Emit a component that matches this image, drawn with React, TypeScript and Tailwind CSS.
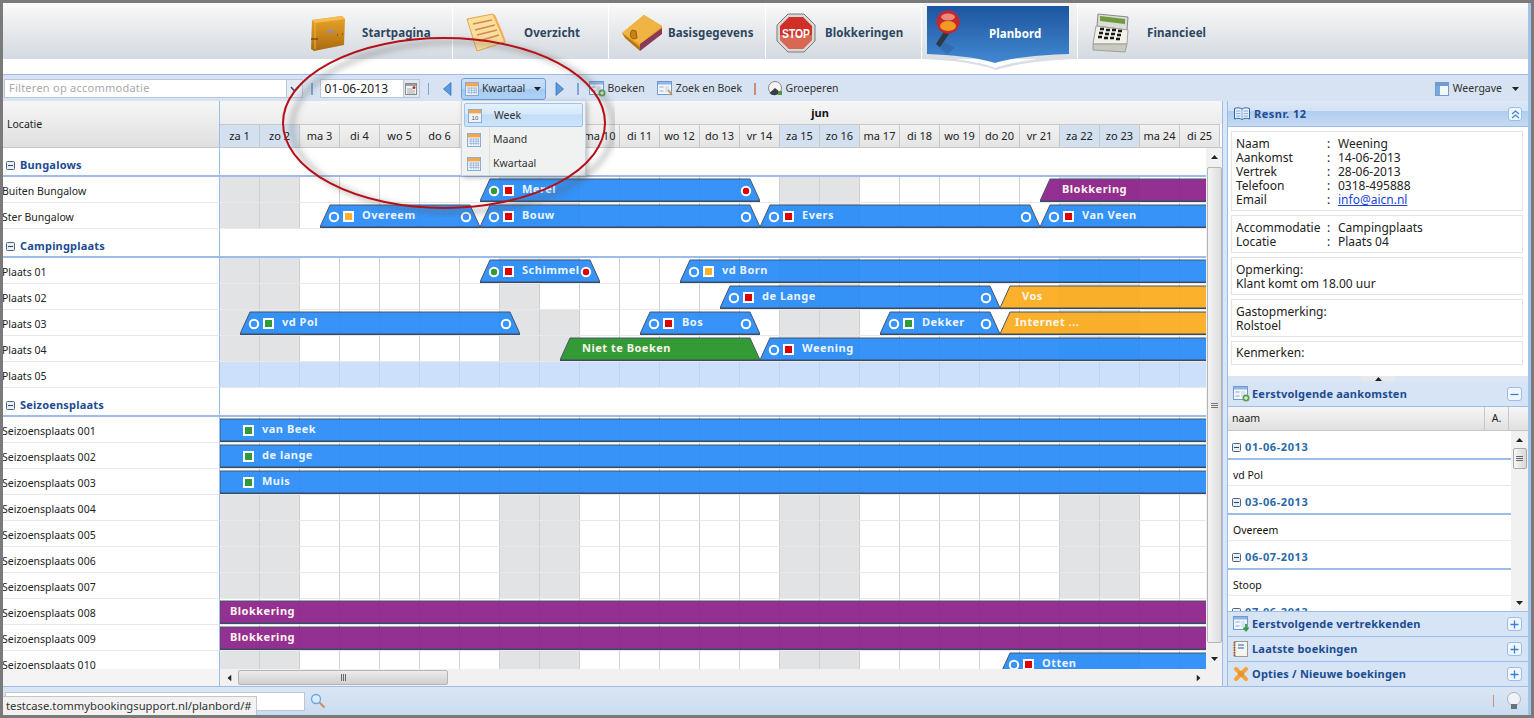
import React from "react";

const BLUE = "#3a94f8";
const days = Array.from({ length: 25 }, (_, i) => {
  const names = ["za", "zo", "ma", "di", "wo", "do", "vr"];
  return { label: `${names[i % 7]} ${i + 1}`, weekend: i % 7 < 2 };
});

type Bar = {
  l: number;
  r?: number;
  t: string;
  c?: "blue" | "purple" | "green" | "orange";
  start?: string;
  sq?: string;
  end?: string;
  tx?: number;
};
type Row = { name: string; bars?: Bar[]; selected?: boolean; white?: number[] };
type Group = { name: string; rows: Row[] };

const G = "#339a3a";
const R = "#dc0000";
const O = "#fbb12d";
const groups: Group[] = [
  {
    name: "Bungalows",
    rows: [
      {
        name: "Buiten Bungalow",
        bars: [
          { l: 480, r: 760, t: "Merel", start: G, sq: R, end: R },
          { l: 1040, t: "Blokkering", c: "purple", tx: 22 },
        ],
      },
      {
        name: "Ster Bungalow",
        bars: [
          { l: 320, r: 480, t: "Overeem", start: BLUE, sq: O, end: BLUE },
          { l: 480, r: 760, t: "Bouw", start: BLUE, sq: R, end: BLUE },
          { l: 760, r: 1040, t: "Evers", start: BLUE, sq: R, end: BLUE },
          { l: 1040, t: "Van Veen", start: BLUE, sq: R },
        ],
      },
    ],
  },
  {
    name: "Campingplaats",
    rows: [
      {
        name: "Plaats 01",
        bars: [
          { l: 480, r: 600, t: "Schimmel", start: G, sq: R, end: R },
          { l: 680, t: "vd Born", start: BLUE, sq: O },
        ],
      },
      {
        name: "Plaats 02",
        white: [8],
        bars: [
          { l: 720, r: 1000, t: "de Lange", start: BLUE, sq: R, end: BLUE },
          { l: 1000, t: "Vos", c: "orange", tx: 22 },
        ],
      },
      {
        name: "Plaats 03",
        bars: [
          { l: 240, r: 520, t: "vd Pol", start: BLUE, sq: G, end: BLUE },
          { l: 640, r: 760, t: "Bos", start: BLUE, sq: R, end: BLUE },
          { l: 880, r: 1000, t: "Dekker", start: BLUE, sq: G, end: BLUE },
          { l: 1000, t: "Internet ...", c: "orange", tx: 15 },
        ],
      },
      {
        name: "Plaats 04",
        bars: [
          { l: 560, r: 760, t: "Niet te Boeken", c: "green", tx: 22 },
          { l: 760, t: "Weening", start: BLUE, sq: R },
        ],
      },
      { name: "Plaats 05", selected: true },
    ],
  },
  {
    name: "Seizoensplaats",
    rows: [
      { name: "Seizoensplaats 001", bars: [{ l: 220, t: "van Beek", sq: G }] },
      { name: "Seizoensplaats 002", bars: [{ l: 220, t: "de lange", sq: G }] },
      { name: "Seizoensplaats 003", bars: [{ l: 220, t: "Muis", sq: G }] },
      { name: "Seizoensplaats 004" },
      { name: "Seizoensplaats 005" },
      { name: "Seizoensplaats 006" },
      { name: "Seizoensplaats 007" },
      { name: "Seizoensplaats 008", bars: [{ l: 220, t: "Blokkering", c: "purple", tx: 10 }] },
      { name: "Seizoensplaats 009", bars: [{ l: 220, t: "Blokkering", c: "purple", tx: 10 }] },
      { name: "Seizoensplaats 010", bars: [{ l: 1000, t: "Otten", start: BLUE, sq: R }] },
    ],
  },
];

const fills: Record<string, string> = {
  blue: "rgba(33,135,246,0.9)",
  purple: "rgba(140,30,138,0.92)",
  green: "#339a35",
  orange: "rgba(251,170,25,0.92)",
};

function BarView({ b }: { b: Bar }) {
  const GRID_R = 1206;
  const openEnd = b.r === undefined;
  const right = b.r ?? GRID_R;
  const w = right - b.l;
  const flushLeft = b.l === 220;
  const topL = flushLeft ? 0 : 10;
  const topR = openEnd ? w : w - 10;
  const c = b.c ?? "blue";
  const points = `0,23 ${topL},1 ${topR},1 ${w},23`;
  const tx = b.tx ?? 42;
  const textClass = c === "blue" ? "text-[#eaf4ff]" : "text-[#fbf6ec]";
  return (
    <div className="absolute top-[1px] h-[24px]" style={{ left: b.l - 220, width: w }}>
      <svg width={w} height={24} className="absolute left-0 top-0 block">
        <polygon points={points} fill={fills[c]} />
        <path d={`M0,23 L${topL},1 L${topR},1 ${openEnd ? "" : `L${w},23`}`} fill="none" stroke="#46566c" strokeWidth="1" />
        <path d={`M0,23.2 L${w},23.2`} stroke="#3a4c63" strokeWidth="1.4" />
      </svg>
      {b.start && <Dot x={14} color={b.start} />}
      {b.sq && <Sq x={28} color={b.sq} />}
      {b.end && <Dot x={w - 14} color={b.end} />}
      <span
        className={`absolute top-[3px] whitespace-nowrap text-[11px] font-bold leading-[16px] tracking-[0.5px] ${textClass}`}
        style={{ left: tx }}
      >
        {b.t}
      </span>
    </div>
  );
}

function Dot({ x, color }: { x: number; color: string }) {
  return (
    <svg width="12" height="12" className="absolute top-[7px]" style={{ left: x - 6 }}>
      <circle cx="6" cy="6" r="4.2" fill={color} stroke="#fff" strokeWidth="2" />
    </svg>
  );
}

function Sq({ x, color }: { x: number; color: string }) {
  return (
    <svg width="11" height="11" className="absolute top-[7px]" style={{ left: x - 5 }}>
      <rect width="11" height="11" fill="#fff" />
      <rect x="2" y="2" width="7" height="7" fill={color} />
    </svg>
  );
}

function Minus() {
  return (
    <svg width="9" height="9" className="shrink-0">
      <rect x="0.5" y="0.5" width="8" height="8" rx="1" fill="#e9eef5" stroke="#4c6480" />
      <path d="M2 4.5H7" stroke="#2d435e" />
    </svg>
  );
}

function Cells({ selected, gray, white }: { selected?: boolean; gray: boolean; white?: number[] }) {
  return (
    <div className="flex h-full w-[1000px]">
      {days.map((d, i) => (
        <div
          key={i}
          className={`h-full w-[40px] shrink-0 border-r ${
            selected
              ? "border-[#c0d4ee] bg-[#cce0fb]"
              : gray && d.weekend && !white?.includes(i)
                ? "border-[#d0d0d0] bg-[#e2e3e5]"
                : "border-[#d0d0d0] bg-white"
          }`}
        />
      ))}
    </div>
  );
}

function TabIcon({ kind }: { kind: string }) {
  switch (kind) {
    case "case":
      return (
        <svg width="36" height="36" viewBox="0 0 36 36">
          <defs>
            <linearGradient id="cs" x1="0" y1="0" x2="0" y2="1">
              <stop offset="0" stopColor="#e9a52c" />
              <stop offset="0.55" stopColor="#c9851a" />
              <stop offset="1" stopColor="#a56a10" />
            </linearGradient>
          </defs>
          <path d="M2 5 L32 1 L35 4 L34 30 L4 36 L1 34Z" fill="url(#cs)" />
          <path d="M2 5 L32 1 L35 4 L5 8Z" fill="#f3bd52" />
          <path d="M5 8 L5 34" stroke="#f0b343" strokeWidth="1" />
          <path d="M1 24 H8" stroke="#52300a" strokeWidth="1" />
          <rect x="17" y="15" width="7" height="3" rx="1.5" fill="#9a8aa8" />
          <path d="M27 20h1M32 19h1" stroke="#3d2405" />
        </svg>
      );
    case "note":
      return (
        <svg width="42" height="40" viewBox="0 0 42 40">
          <path d="M2 6 L28 1 L40 29 L12 38Z" fill="#fbdf9b" stroke="#e0a64b" />
          <path d="M29 2 L36 18 L40 29" fill="none" stroke="#f3ae5a" strokeWidth="2" />
          <path d="M8 11 L27 7 M10 17 L30 12 M12 22 L32 17 M14 28 L34 22" stroke="#d0875a" strokeWidth="1.6" />
        </svg>
      );
    case "book":
      return (
        <svg width="44" height="38" viewBox="0 0 44 38">
          <path d="M2 19 L24 1 L42 12 L42 19 L20 36Z" fill="#e6a02a" />
          <path d="M2 19 L24 1 L42 12 L20 30Z" fill="#efb444" />
          <path d="M20 30 L42 14 L42 20 L20 37Z" fill="#8a3a57" />
          <path d="M12 16 C8 22 12 27 17 24 L16 17Z" fill="#c98117" stroke="#9a5f0c" />
          <path d="M2 19 L20 33 L20 37 L5 24Z" fill="#b77510" />
        </svg>
      );
    case "stop":
      return (
        <svg width="40" height="40" viewBox="0 0 40 40">
          <polygon points="12,1 28,1 39,12 39,28 28,39 12,39 1,28 1,12" fill="#d8d8d8" stroke="#7a7a7a" />
          <polygon points="13,4 27,4 36,13 36,27 27,36 13,36 4,27 4,13" fill="#cf2f26" />
          <polygon points="4,22 36,22 36,27 27,36 13,36 4,27" fill="#dd8f72" opacity="0.6" />
          <text x="20" y="25" textAnchor="middle" fontSize="13" fontWeight="700" fill="#fff" fontFamily="Liberation Sans, sans-serif" textLength="28" lengthAdjust="spacingAndGlyphs">STOP</text>
        </svg>
      );
    case "pin":
      return (
        <svg width="30" height="44" viewBox="0 0 30 44">
          <path d="M6 30 L20 38 L12 44 L2 36Z" fill="#2b5f9e" opacity="0.5" />
          <path d="M10 20 L1 34 L5 37 L14 24Z" fill="#2e3a42" />
          <circle cx="13" cy="12" r="11.500" fill="#c9252b" />
          <ellipse cx="13" cy="7" rx="7" ry="3.500" fill="#ea8a7a" />
          <ellipse cx="13" cy="16" rx="8" ry="5" fill="#ee9d22" />
        </svg>
      );
    default:
      return (
        <svg width="40" height="42" viewBox="0 0 40 42">
          <path d="M7 2 L37 5 L36 18 L6 14Z" fill="#dcdcd8" stroke="#8a8a88" />
          <path d="M9 4 L34 7 L34 12 L9 9Z" fill="#6f9a3f" />
          <path d="M5 14 L37 18 L36 32 L2 32Z" fill="#f1f1ea" stroke="#a4a49e" />
          <path d="M2 32 L36 32 L34 40 L2 38Z" fill="#c9c9c0" stroke="#a0a09a" />
          <path d="M9 17h4M15 18h4M21 18h4M27 19h4M8 21h4M14 22h4M20 22h4M26 23h4M7 25h4M13 26h4M19 26h4M25 27h4" stroke="#1a1a1a" strokeWidth="2.4" />
        </svg>
      );
  }
}

const tabLabel = "text-[11.5px] font-bold tracking-[0.1px]";

function Tab({ icon, label, w, iconW, last }: { icon: string; label: string; w: string; iconW: string; last?: boolean }) {
  return (
    <div className={`flex h-[56px] shrink-0 items-center pt-[4px] ${last ? "" : "border-r border-white"} ${w}`}>
      <div className={`flex shrink-0 justify-start ${iconW}`}>
        <TabIcon kind={icon} />
      </div>
      <span className={`${tabLabel} whitespace-nowrap text-[#2d4660]`}>{label}</span>
    </div>
  );
}

function CalIcon({ size = 16, big }: { size?: number; big?: boolean }) {
  return (
    <svg width={size} height={size} viewBox="0 0 16 16" className="shrink-0">
      <rect x="0.5" y="0.5" width="15" height="15" fill="#eef4fb" stroke="#7ba3d4" />
      <rect x="1" y="1" width="14" height="4" fill="#f3a64e" />
      {big ? (
        <text x="8" y="13" textAnchor="middle" fontSize="7" fill="#555" fontFamily="Liberation Sans, sans-serif">10</text>
      ) : (
        <path d="M2 7H14M2 9.5H14M2 12H14M4.5 6V14M7.5 6V14M10.5 6V14M13 6V14" stroke="#8fb0d8" strokeWidth="0.8" />
      )}
    </svg>
  );
}

function WinIcon({ badge }: { badge?: string }) {
  return (
    <svg width="17" height="16" viewBox="0 0 17 16" className="shrink-0">
      <rect x="0.5" y="0.5" width="14" height="13" fill="#f3f7fc" stroke="#6f9bd0" />
      <rect x="1" y="1" width="13" height="2.5" fill="#8fb6e2" />
      <rect x="2.5" y="5" width="4" height="2" fill="#bcd1ea" />
      <rect x="2.5" y="9" width="4" height="2" fill="#bcd1ea" />
      <rect x="8" y="5" width="4" height="6" fill="#d9e4f2" />
      {badge === "plus" && (
        <>
          <circle cx="13" cy="12" r="3.5" fill="#59a14a" />
          <path d="M11 12H15M13 10V14" stroke="#fff" />
        </>
      )}
      {badge === "down" && <path d="M13 8V14M10.500 11.500L13 14.500L15.500 11.500" stroke="#3f9a3a" strokeWidth="1.800" fill="none" />}
      {badge === "zoom" && <path d="M11 9 L15 14" stroke="#d98b3f" strokeWidth="1.6" />}
    </svg>
  );
}

function Sep({ c = "#7fa6d6", cls = "" }: { c?: string; cls?: string }) {
  return <div className={`h-[12px] w-[1.5px] shrink-0 ${cls}`} style={{ background: c }} />;
}

function ArrowIcon({ dir }: { dir: "l" | "r" }) {
  return (
    <svg width="9" height="14" viewBox="0 0 9 14" className="shrink-0">
      <path d={dir === "l" ? "M8 0.5 V13.5 L0.5 7Z" : "M1 0.5 V13.5 L8.5 7Z"} fill="#5b9ae0" stroke="#2d6bb5" strokeWidth="0.7" />
    </svg>
  );
}

function Tri({ up, cls = "" }: { up?: boolean; cls?: string }) {
  return (
    <svg width="7" height="4" viewBox="0 0 7 4" className={`shrink-0 ${cls}`}>
      <path d={up ? "M0 4H7L3.5 0Z" : "M0 0H7L3.5 4Z"} fill="#222" />
    </svg>
  );
}

function Toolbar() {
  return (
    <div className="flex h-[27px] shrink-0 items-center border-t border-[#9cbde8] bg-[#d7e3f2] pl-[1px] pt-[1px] text-[10.5px] text-[#333]">
      <div className="flex h-[19px] w-[299px] shrink-0 items-stretch border border-[#b8c6d8] bg-white">
        <div className="flex flex-1 items-center pl-[4px] text-[11px] tracking-[0.25px] text-[#a9a9a9]">Filteren op accommodatie</div>
        <div className="flex w-[16px] items-center justify-center border-l border-[#b8c6d8] bg-[#e6ecf4]">
          <svg width="9" height="6" viewBox="0 0 9 6"><path d="M1 1L4.500 5L8 1" stroke="#2d4a85" strokeWidth="1.500" fill="none" /></svg>
        </div>
      </div>
      <Sep cls="ml-[8px]" />
      <div className="ml-[7px] flex h-[19px] w-[100px] shrink-0 items-stretch border border-[#b8c6d8] bg-white">
        <div className="flex flex-1 items-center pl-[4px] text-[12px] tracking-[0.1px] text-[#222]">01-06-2013</div>
        <div className="flex w-[16px] items-center justify-center border-l border-[#b8c6d8] bg-[#e4e8ee]">
          <svg width="12" height="12" viewBox="0 0 12 12">
            <rect x="0.500" y="0.500" width="11" height="11" fill="#f4f4f4" stroke="#8a8a8a" />
            <rect x="1" y="1" width="10" height="2" fill="#9aa0a8" />
            <circle cx="9" cy="4.500" r="1.500" fill="#b8323a" />
            <path d="M2 6H8M2 8H10M2 10H10" stroke="#a8a8a8" />
          </svg>
        </div>
      </div>
      <Sep cls="ml-[8px]" />
      <div className="ml-[14px]"><ArrowIcon dir="l" /></div>
      <div className="ml-[9px] flex h-[22px] w-[85px] shrink-0 items-center rounded-[3px] border border-[#6ca0dc] bg-[linear-gradient(#c8dff7_0%,#bcd7f4_50%,#a3c9f1_52%,#b2d3f5_100%)] pl-[3px]">
        <CalIcon size={14} />
        <span className="ml-[3px]">Kwartaal</span>
        <Tri cls="ml-[9px]" />
      </div>
      <div className="ml-[9px]"><ArrowIcon dir="r" /></div>
      <Sep cls="ml-[13px]" />
      <div className="ml-[10px] flex shrink-0 items-center gap-[2px]"><WinIcon badge="plus" /><span>Boeken</span></div>
      <div className="ml-[12px] flex shrink-0 items-center gap-[2px]"><WinIcon badge="zoom" /><span>Zoek en Boek</span></div>
      <Sep c="#c98f72" cls="ml-[12px]" />
      <div className="ml-[12px] flex shrink-0 items-center gap-[3px]">
        <svg width="15" height="15" viewBox="0 0 15 15" className="shrink-0">
          <circle cx="7" cy="7" r="6.500" fill="#f4f4f4" stroke="#888" />
          <path d="M7 7 L1.500 12 A6.500 6.500 0 0 0 12 11Z" fill="#3a3f45" />
          <rect x="10" y="10" width="4" height="4" fill="#4c9a3e" />
        </svg>
        <span>Groeperen</span>
      </div>
      <div className="flex-1" />
      <div className="mr-[9px] flex shrink-0 items-center">
        <svg width="14" height="14" viewBox="0 0 14 14" className="shrink-0">
          <rect x="0.500" y="0.500" width="13" height="13" fill="#f3f7fc" stroke="#6f9bd0" />
          <rect x="1" y="1" width="12" height="3" fill="#6f9bd0" />
          <rect x="1" y="4" width="4" height="9" fill="#7da8da" />
        </svg>
        <span className="ml-[4px]">Weergave</span>
        <Tri cls="ml-[10px]" />
      </div>
    </div>
  );
}

function Header() {
  return (
    <div className="relative flex h-[56px] shrink-0 bg-[linear-gradient(#fbfbfb_0%,#f0f1f2_25%,#d4dae1_100%)] pl-[294px]">
      <Tab icon="case" label="Startpagina" w="w-[156px]" iconW="ml-[13px] w-[36px] mr-[16px]" />
      <Tab icon="note" label="Overzicht" w="w-[156px]" iconW="ml-[12px] w-[42px] mr-[17px]" />
      <Tab icon="book" label="Basisgegevens" w="w-[157px]" iconW="ml-[11px] w-[44px] mr-[4px]" />
      <Tab icon="stop" label="Blokkeringen" w="w-[156px]" iconW="ml-[10px] w-[40px] mr-[9px]" />
      <div className="relative w-[156px] shrink-0 border-r border-white bg-[linear-gradient(#f5f5f5,#dadfe5)]">
        <svg width="156" height="70" viewBox="0 0 156 70" className="absolute left-0 top-0 overflow-visible">
          <defs>
            <linearGradient id="pl" x1="0" y1="0" x2="0" y2="1">
              <stop offset="0" stopColor="#1c55a1" />
              <stop offset="0.45" stopColor="#2e6cb4" />
              <stop offset="1" stopColor="#4189d2" />
            </linearGradient>
          </defs>
          <path d="M0 56 L3 53 C30 55 56 58 73 65 C92 58 120 55 154 53 L156 56 C125 57 96 60 74 67 C54 60 28 57 0 56Z" fill="#d9dfe5" />
          <path d="M5 3 H147 V51 C120 52 92 54 73 60 C54 54 30 52 5 51Z" fill="url(#pl)" />
        </svg>
        <div className="absolute left-[13px] top-[7px]"><TabIcon kind="pin" /></div>
        <span className={`absolute left-[67px] top-[23px] leading-[16px] text-white ${tabLabel}`}>Planbord</span>
      </div>
      <Tab icon="reg" label="Financieel" w="w-[157px]" iconW="ml-[13px] w-[40px] mr-[16px]" last />
    </div>
  );
}

function DayHeader() {
  return (
    <div className="flex h-[47px] shrink-0 border-b border-[#c6c6c6]">
      <div className="flex w-[217px] shrink-0 items-center border-r border-[#9cbde8] bg-[linear-gradient(#f6f6f6,#dfdfdf)] pl-[4px] pt-[2px] text-[10.5px] text-[#222]">Locatie</div>
      <div className="flex w-[1002px] shrink-0 flex-col overflow-hidden">
        <div className="h-[23px] w-[1200px] shrink-0 bg-[linear-gradient(#f6f6f6,#ececec)] text-center text-[11px] font-bold leading-[24px] text-[#111]">jun</div>
        <div className="flex h-[23px]">
          {days.map((d, i) => (
            <div
              key={i}
              className={`flex w-[40px] shrink-0 items-center justify-center border-r border-t border-[#c8c8c8] text-[11px] text-[#222] ${
                d.weekend ? "bg-[#d3e0f0]" : "bg-[linear-gradient(#f2f2f2,#e4e4e4)]"
              }`}
            >
              {d.label}
            </div>
          ))}
        </div>
      </div>
    </div>
  );
}

function VScrollbar() {
  return (
    <div className="flex w-[16px] shrink-0 flex-col items-center bg-[#f1f1f1]">
      <Tri up cls="mt-[7px]" />
      <div className="mt-[8px] flex h-[476px] w-[15px] shrink-0 items-center justify-center rounded-[2px] border border-[#b5b5b5] bg-[linear-gradient(90deg,#f4f4f4,#dcdcdc)]">
        <div className="flex flex-col gap-[1px]">
          <div className="h-[1px] w-[7px] bg-[#777]" />
          <div className="h-[1px] w-[7px] bg-[#777]" />
          <div className="h-[1px] w-[7px] bg-[#777]" />
        </div>
      </div>
      <Tri cls="mt-[14px]" />
    </div>
  );
}

function GanttBody() {
  return (
    <div className="flex h-[521px] shrink-0 overflow-hidden">
      <div className="flex w-[1203px] shrink-0 flex-col overflow-hidden bg-white">
        {groups.map((g) => (
          <React.Fragment key={g.name}>
            <div className="flex h-[29px] shrink-0 border-b-2 border-[#9cbde8]">
              <div className="flex w-[217px] shrink-0 items-center gap-[4px] border-r border-[#9cbde8] pl-[3px] pt-[7px] text-[11px] font-bold tracking-[0.2px] text-[#1c4c92]">
                <Minus />
                <span className="ml-[1px]">{g.name}</span>
              </div>
            </div>
            {g.rows.map((r) => {
              const rect = !!r.bars && r.bars[0].l === 220;
              return (
                <div key={r.name} className="flex h-[26px] shrink-0">
                  <div className="w-[217px] shrink-0 overflow-hidden border-b border-r border-[#9cbde8] border-b-[#e8e8e8] text-[10.5px] leading-[29px] text-[#222]">
                    <span className="-ml-[1px] block whitespace-nowrap">{r.name}</span>
                  </div>
                  <div className="relative h-[26px] w-[986px] shrink-0 overflow-hidden border-b border-[#e8e8e8]">
                    <Cells selected={r.selected} gray={!rect} white={r.white} />
                    {r.bars?.map((b, i) => <BarView key={i} b={b} />)}
                  </div>
                </div>
              );
            })}
          </React.Fragment>
        ))}
      </div>
      <VScrollbar />
    </div>
  );
}

function HScrollbar() {
  return (
    <div className="flex h-[17px] shrink-0">
      <div className="w-[217px] shrink-0 border-r border-[#9cbde8] bg-[#f4f4f4]" />
      <div className="flex w-[986px] shrink-0 items-center bg-[#f1f1f1] pl-[6px]">
        <Tri cls="rotate-90" />
        <div className="ml-[5px] flex h-[15px] w-[210px] items-center justify-center gap-[1px] rounded-[2px] border border-[#b5b5b5] bg-[linear-gradient(#ececec,#cfcfcf)]">
          <div className="h-[7px] w-[1px] bg-[#666]" />
          <div className="h-[7px] w-[1px] bg-[#666]" />
          <div className="h-[7px] w-[1px] bg-[#666]" />
        </div>
        <div className="flex-1" />
        <Tri cls="mr-[4px] -rotate-90" />
      </div>
      <div className="flex-1 bg-[#f1f1f1]" />
    </div>
  );
}

function Card({ children }: { children: React.ReactNode }) {
  return <div className="mb-[4px] ml-[3px] mr-[5px] border border-[#e4e4e4] px-[4px] pb-[3px] pt-[5px] text-[12px] leading-[14px] text-[#222]">{children}</div>;
}

function KV({ k, v, link }: { k: string; v: string; link?: boolean }) {
  return (
    <div className="flex h-[14px]">
      <span className="w-[91px] shrink-0">{k}</span>
      <span className="w-[11px] shrink-0">:</span>
      <span className={link ? "text-[#1b45d8] underline" : ""}>{v}</span>
    </div>
  );
}

function SidePanelHead({ title, icon, tool }: { title: string; icon: React.ReactNode; tool: "plus" | "minus" }) {
  return (
    <div className="flex h-[25px] shrink-0 items-center border-b border-[#9cbde8] bg-[#d6e4f5] pl-[5px] pr-[6px]">
      <div className="flex w-[19px] shrink-0">{icon}</div>
      <span className="flex-1 text-[11px] font-bold tracking-[0.2px] text-[#1c4c92]">{title}</span>
      <div className="flex h-[14px] w-[15px] items-center justify-center rounded-[3px] border border-[#9cbde8] bg-[#f0f6fd]">
        <svg width="9" height="9" viewBox="0 0 9 9">
          <path d={tool === "plus" ? "M0.500 4.500H8.500M4.500 0.500V8.500" : "M0.500 4.500H8.500"} stroke="#3a7fd0" strokeWidth="1.300" />
        </svg>
      </div>
    </div>
  );
}

function ListGroup({ date, name }: { date: string; name: string }) {
  return (
    <>
      <div className="flex h-[29px] shrink-0 items-center gap-[3px] border-b-2 border-[#9cbde8] pl-[4px] pt-[5px] text-[11px] font-bold tracking-[0.6px] text-[#2a6aa8]">
        <Minus />
        <span className="ml-[1px]">{date}</span>
      </div>
      <div className="flex h-[26px] shrink-0 items-center border-b border-[#e8e8e8] pl-[5px] pt-[6px] text-[10.5px] text-[#111]">{name}</div>
    </>
  );
}

function SidePanel() {
  return (
    <div className="flex w-[301px] shrink-0 flex-col overflow-hidden border-l border-[#9cbde8] bg-white">
      <div className="flex h-[26px] shrink-0 items-center border-b border-[#9cbde8] bg-[linear-gradient(#dce8f6_0%,#d3e2f4_38%,#b0cdef_42%,#c6daf2_100%)] pl-[6px] pr-[6px] pt-[1px]">
        <svg width="16" height="14" viewBox="0 0 16 14" className="shrink-0">
          <path d="M0.500 1.500 C3 0.500 6 0.500 8 2 C10 0.500 13 0.500 15.500 1.500 V12 C13 11 10 11 8 12.500 C6 11 3 11 0.500 12Z" fill="#e8f1fb" stroke="#2f659f" />
          <path d="M8 2V12.500M2 4H6.500M2 6.500H6.500M2 9H6.500M9.500 4H14M9.500 6.500H14M9.500 9H14" stroke="#6f9bd0" strokeWidth="0.800" />
        </svg>
        <span className="ml-[4px] flex-1 text-[11px] font-bold tracking-[0.5px] text-[#1c4c92]">Resnr. 12</span>
        <div className="flex h-[14px] w-[14px] items-center justify-center rounded-[3px] border border-[#9cbde8] bg-[#f0f6fd]">
          <svg width="9" height="9" viewBox="0 0 9 9" fill="none" stroke="#3a7fd0" strokeWidth="1.200">
            <path d="M1 4 L4.500 1 L8 4M1 8 L4.500 5 L8 8" />
          </svg>
        </div>
      </div>
      <div className="flex h-[249px] shrink-0 flex-col pt-[4px]">
        <Card>
          <KV k="Naam" v="Weening" />
          <KV k="Aankomst" v="14-06-2013" />
          <KV k="Vertrek" v="28-06-2013" />
          <KV k="Telefoon" v="0318-495888" />
          <KV k="Email" v="info@aicn.nl" link />
        </Card>
        <Card>
          <KV k="Accommodatie" v="Campingplaats" />
          <KV k="Locatie" v="Plaats 04" />
        </Card>
        <Card>
          <div>Opmerking:</div>
          <div>Klant komt om 18.00 uur</div>
        </Card>
        <Card>
          <div>Gastopmerking:</div>
          <div>Rolstoel</div>
        </Card>
        <div className="ml-[3px] mr-[5px] flex h-[24px] items-center border border-[#e4e4e4] px-[4px] text-[12px] text-[#222]">Kenmerken:</div>
      </div>
      <div className="flex h-[6px] shrink-0 justify-center bg-[#dbe6f4]">
        <div className="flex h-[5px] w-[34px] items-center justify-center bg-[#e8e8e8]"><Tri up /></div>
      </div>
      <SidePanelHead title="Eerstvolgende aankomsten" tool="minus" icon={<WinIcon badge="plus" />} />
      <div className="flex h-[24px] shrink-0 border-b border-[#c6c6c6] bg-[linear-gradient(#f6f6f6,#e0e0e0)] text-[10.5px] text-[#222]">
        <div className="flex w-[257px] items-center border-r border-[#c6c6c6] pl-[4px]">naam</div>
        <div className="flex w-[24px] items-center justify-center border-r border-[#c6c6c6]">A.</div>
      </div>
      <div className="flex h-[180px] shrink-0">
        <div className="flex w-[283px] shrink-0 flex-col overflow-hidden">
          <ListGroup date="01-06-2013" name="vd Pol" />
          <ListGroup date="03-06-2013" name="Overeem" />
          <ListGroup date="06-07-2013" name="Stoop" />
          <ListGroup date="07-06-2013" name="" />
        </div>
        <div className="flex flex-1 flex-col items-center bg-[#f1f1f1]">
          <Tri up cls="mt-[7px]" />
          <div className="mt-[6px] flex h-[21px] w-[14px] flex-col items-center justify-center gap-[1px] rounded-[2px] border border-[#aaa] bg-[linear-gradient(90deg,#f6f6f6,#d8d8d8)]">
            <div className="h-[1px] w-[7px] bg-[#666]" />
            <div className="h-[1px] w-[7px] bg-[#666]" />
            <div className="h-[1px] w-[7px] bg-[#666]" />
          </div>
          <div className="flex-1" />
          <Tri cls="mb-[6px]" />
        </div>
      </div>
      <div className="h-[1px] shrink-0 bg-[#9cbde8]" />
      <SidePanelHead title="Eerstvolgende vertrekkenden" tool="plus" icon={<WinIcon badge="down" />} />
      <SidePanelHead
        title="Laatste boekingen"
        tool="plus"
        icon={
          <svg width="15" height="16" viewBox="0 0 15 16">
            <rect x="1.500" y="0.500" width="13" height="15" fill="#f4f4f0" stroke="#9a9a90" />
            <path d="M1.500 1V15" stroke="#b4562c" strokeWidth="2" strokeDasharray="1.500 1" />
            <path d="M5 4H11M5 7H11" stroke="#5f90c8" strokeWidth="1.300" />
          </svg>
        }
      />
      <SidePanelHead
        title="Opties / Nieuwe boekingen"
        tool="plus"
        icon={
          <svg width="16" height="16" viewBox="0 0 16 16">
            <path d="M3 3 L13 13 M13 3 L3 13" stroke="#f2a53a" strokeWidth="4" strokeLinecap="round" />
            <circle cx="8" cy="8" r="3" fill="#e8942c" />
          </svg>
        }
      />
    </div>
  );
}

function StatusBar() {
  return (
    <div className="relative flex h-[29px] shrink-0 items-center border-t border-[#9cbde8] bg-[linear-gradient(#dbe6f4,#cbdcf1)] pl-[2px]">
      <div className="h-[19px] w-[300px] shrink-0 border border-[#b8c6d8] bg-white" />
      <svg width="16" height="16" viewBox="0 0 16 16" className="ml-[5px] shrink-0">
        <circle cx="6" cy="6" r="4.500" fill="#dcebfb" stroke="#6ca6e2" strokeWidth="1.300" />
        <path d="M9.500 9.500 L14.500 14.500" stroke="#cf9060" strokeWidth="2.200" />
      </svg>
      <div className="flex-1" />
      <Sep c="#c98f72" />
      <svg width="16" height="18" viewBox="0 0 16 18" className="ml-[12px] mr-[6px] shrink-0">
        <circle cx="8" cy="7" r="6.500" fill="#f0f3f6" stroke="#a9b4c0" />
        <rect x="5" y="12" width="6" height="5" fill="#6a727a" />
      </svg>
      <div className="absolute bottom-0 left-0 z-10 flex h-[19px] w-[254px] items-center overflow-hidden whitespace-nowrap border-r border-t border-[#c6c6c6] bg-[#f2f2f2] pl-[3px] text-[11.250px] text-[#333]">
        testcase.tommybookingsupport.nl/planbord/#
      </div>
    </div>
  );
}

function MenuOverlay() {
  const items = [
    { t: "Week", big: true, active: true },
    { t: "Maand" },
    { t: "Kwartaal" },
  ];
  return (
    <div className="absolute left-[458px] top-[97px] z-20 h-[76px] w-[125px] border border-[#c6d3e4] bg-[#f0f1f1] p-[2px] text-[10.5px] shadow-[2px_2px_5px_rgba(0,0,0,0.25)]">
      <div className="absolute bottom-0 left-[27px] top-[2px] w-[1px] bg-[#dcdfe3]" />
      {items.map((it) => (
        <div
          key={it.t}
          className={`relative flex h-[24px] items-center rounded-[2px] pl-[3px] pt-[2px] text-[#333] ${
            it.active ? "border border-[#9cc3ee] bg-[linear-gradient(#e4f1fd_0%,#d6e9fc_45%,#c3dcf8_50%,#cfe4fa_100%)]" : ""
          }`}
        >
          <CalIcon size={14} big={it.big} />
          <span className="ml-[12px]">{it.t}</span>
        </div>
      ))}
    </div>
  );
}

function Ellipse() {
  return (
    <svg width="340" height="190" viewBox="0 0 340 190" className="pointer-events-none absolute left-[272px] top-[24px] z-30">
      <defs>
        <filter id="sh" x="-10%" y="-10%" width="120%" height="120%">
          <feGaussianBlur stdDeviation="3" />
        </filter>
      </defs>
      <ellipse cx="172" cy="96" rx="161" ry="85" fill="none" stroke="#555" strokeOpacity="0.55" strokeWidth="3" filter="url(#sh)" transform="translate(6 4)" />
      <ellipse cx="169" cy="96" rx="161" ry="85" fill="none" stroke="#b80f17" strokeWidth="2" />
    </svg>
  );
}

export default function App() {
  return (
    <div className="h-[718px] w-[1534px] overflow-hidden bg-[#7a7a7a] p-[3px] font-['Noto_Sans',sans-serif]">
      <div className="relative flex h-[712px] w-[1528px] bg-[#a4c2e8]">
        <div className="flex w-[1525px] shrink-0 flex-col bg-white">
          <Header />
          <div className="h-[15px] shrink-0 bg-white" />
          <Toolbar />
          <div className="flex min-h-0 flex-1">
            <div className="flex w-[1219px] shrink-0 flex-col">
              <DayHeader />
              <GanttBody />
              <HScrollbar />
            </div>
            <div className="flex w-[5px] shrink-0 border-l border-[#9cbde8] bg-[#dbe6f4]" />
            <SidePanel />
          </div>
          <StatusBar />
        </div>
        <MenuOverlay />
        <Ellipse />
      </div>
    </div>
  );
}
